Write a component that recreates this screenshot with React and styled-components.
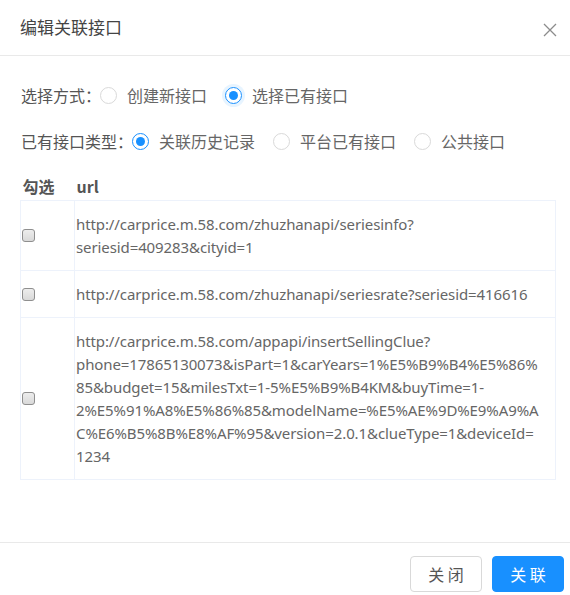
import React, { useState } from "react";
import styled, { createGlobalStyle } from "styled-components";

const GlobalStyle = createGlobalStyle`
  html, body {
    margin: 0;
    padding: 0;
    background: #fff;
  }
  body {
    font-family: "Noto Sans", "Noto Sans CJK SC", sans-serif;
    color: #666;
  }
  * {
    box-sizing: border-box;
  }
`;

// break hints (<wbr>) sit where the long urls wrap
const rows = [
  ["http://carprice.m.58.com/zhuzhanapi/seriesinfo?", "seriesid=409283&cityid=1"],
  ["http://carprice.m.58.com/zhuzhanapi/seriesrate?seriesid=416616"],
  [
    "http://carprice.m.58.com/appapi/insertSellingClue?",
    "phone=17865130073&isPart=1&carYears=1%E5%B9%B4%E5%86%",
    "85&budget=15&milesTxt=1-5%E5%B9%B4KM&buyTime=1-",
    "2%E5%91%A8%E5%86%85&modelName=%E5%AE%9D%E9%A9%A",
    "C%E6%B5%8B%E8%AF%95&version=2.0.1&clueType=1&deviceId=",
    "1234",
  ],
];

const Radio = ({ checked, focused, label, onClick }) => (
  <RadioItem onClick={onClick}>
    <RadioCircle checked={checked} focused={focused} />
    <RadioLabel>{label}</RadioLabel>
  </RadioItem>
);

export default function App() {
  const [mode, setMode] = useState("existing");
  const [kind, setKind] = useState("history");
  const [picked, setPicked] = useState([]);

  const toggle = (i) =>
    setPicked((p) => (p.includes(i) ? p.filter((x) => x !== i) : [...p, i]));

  return (
    <>
      <GlobalStyle />
      <Dialog>
        <Header>
          <Title>编辑关联接口</Title>
          <CloseButton aria-label="close">
            <svg width="14" height="14" viewBox="0 0 14 14">
              <path
                d="M1 1 L13 13 M13 1 L1 13"
                stroke="#8c8c8c"
                strokeWidth="1.3"
                fill="none"
              />
            </svg>
          </CloseButton>
        </Header>
        <Body>
          <FormRow>
            <FormLabel>选择方式：</FormLabel>
            <Radio
              label="创建新接口"
              checked={mode === "new"}
              onClick={() => setMode("new")}
            />
            <Radio
              label="选择已有接口"
              checked={mode === "existing"}
              focused
              onClick={() => setMode("existing")}
            />
          </FormRow>
          <FormRow>
            <FormLabel>已有接口类型：</FormLabel>
            <Radio
              label="关联历史记录"
              checked={kind === "history"}
              onClick={() => setKind("history")}
            />
            <Radio
              label="平台已有接口"
              checked={kind === "platform"}
              onClick={() => setKind("platform")}
            />
            <Radio
              label="公共接口"
              checked={kind === "public"}
              onClick={() => setKind("public")}
            />
          </FormRow>
          <Table>
            <thead>
              <tr>
                <HeadCell>勾选</HeadCell>
                <HeadCell>url</HeadCell>
              </tr>
            </thead>
            <tbody>
              {rows.map((parts, i) => (
                <tr key={i}>
                  <CheckCell>
                    <CheckBox
                      checked={picked.includes(i)}
                      onClick={() => toggle(i)}
                    />
                  </CheckCell>
                  <UrlCell>
                    {parts.map((p, j) => (
                      <React.Fragment key={j}>
                        {j > 0 && <wbr />}
                        {p}
                      </React.Fragment>
                    ))}
                  </UrlCell>
                </tr>
              ))}
            </tbody>
          </Table>
        </Body>
        <Footer>
          <Button>关 闭</Button>
          <Button primary>关 联</Button>
        </Footer>
      </Dialog>
    </>
  );
}

const Dialog = styled.div`
  width: 570px;
  height: 595px;
  display: flex;
  flex-direction: column;
  background: #fff;
`;

const Header = styled.div`
  height: 56px;
  flex: 0 0 56px;
  padding: 0 13px 3px 20px;
  display: flex;
  align-items: center;
  justify-content: space-between;
  border-bottom: 1px solid #e9e9e9;
`;

const Title = styled.div`
  font-size: 17px;
  color: #444;
  font-family: "Noto Sans CJK SC", sans-serif;
`;

const CloseButton = styled.button`
  border: none;
  background: none;
  padding: 0;
  margin-top: 7px;
  width: 14px;
  height: 14px;
  display: flex;
  cursor: pointer;
`;

const Body = styled.div`
  flex: 1;
  padding: 23px 20px 0 20px;
`;

const FormRow = styled.div`
  display: flex;
  align-items: center;
  height: 32px;
  margin-bottom: 14px;
  font-size: 16px;
  font-family: "Noto Sans CJK SC", sans-serif;
  color: #555;
`;

const FormLabel = styled.span`
  margin-left: 1px;
  margin-right: -1px;
`;

const RadioItem = styled.label`
  display: flex;
  align-items: center;
  margin-right: 18px;
  cursor: pointer;
`;

const RadioCircle = styled.span`
  width: 17px;
  height: 17px;
  border-radius: 50%;
  border: 1px solid ${(p) => (p.checked ? "#1890ff" : "#d9d9d9")};
  display: inline-flex;
  align-items: center;
  justify-content: center;
  box-shadow: ${(p) =>
    p.checked && p.focused ? "0 0 0 3px rgba(24, 144, 255, 0.1)" : "none"};
  &::after {
    content: "";
    width: 9px;
    height: 9px;
    border-radius: 50%;
    background: #1890ff;
    display: ${(p) => (p.checked ? "block" : "none")};
  }
`;

const RadioLabel = styled.span`
  margin-left: 10px;
  color: #666;
`;

const Table = styled.table`
  margin-top: 17px;
  width: 536px;
  border-collapse: collapse;
  table-layout: fixed;
`;

const HeadCell = styled.th`
  text-align: left;
  font-size: 16px;
  font-weight: bold;
  color: #555;
  height: 24px;
  padding: 0 0 2px 2px;
  font-family: "Noto Sans CJK SC", sans-serif;
  &:first-child {
    width: 54px;
  }
`;

const CheckCell = styled.td`
  border: 1px solid #edf2fb;
  padding: 0 0 0 1px;
  vertical-align: middle;
`;

const UrlCell = styled.td`
  border: 1px solid #edf2fb;
  padding: 12px 0 11px 1px;
  font-size: 15px;
  letter-spacing: -0.1px;
  line-height: 23px;
  color: #666;
  overflow-wrap: break-word;
  font-family: "Noto Sans", sans-serif;
`;

const CheckBox = styled.span`
  display: block;
  width: 13px;
  height: 13px;
  border: 1px solid #8f8f8f;
  border-radius: 3px;
  background: ${(p) =>
    p.checked ? "#1890ff" : "linear-gradient(#ededed, #d9d9d9)"};
  cursor: pointer;
`;

const Footer = styled.div`
  flex: 0 0 auto;
  border-top: 1px solid #e9e9e9;
  padding: 13px 6px 3px 0;
  display: flex;
  justify-content: flex-end;
  gap: 10px;
`;

const Button = styled.button`
  width: 72px;
  height: 36px;
  border-radius: 4px;
  font-size: 16px;
  font-family: "Noto Sans CJK SC", sans-serif;
  border: 1px solid ${(p) => (p.primary ? "#1890ff" : "#d9d9d9")};
  background: ${(p) => (p.primary ? "#1890ff" : "#fff")};
  color: ${(p) => (p.primary ? "#fff" : "#555")};
  cursor: pointer;
  padding: 0;
`;
